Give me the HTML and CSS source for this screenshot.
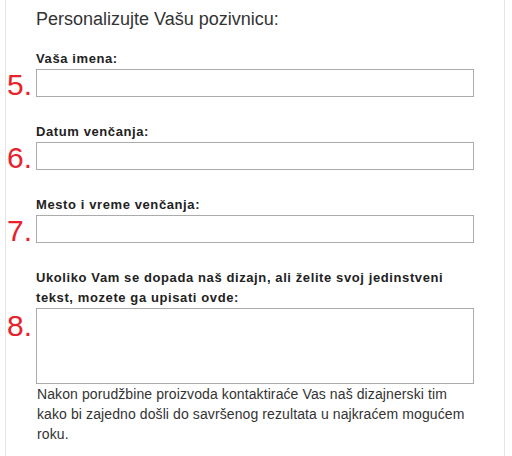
FILE: index.html
```html
<!DOCTYPE html>
<html lang="sr">
<head>
<meta charset="utf-8">
<title>Personalizujte Vašu pozivnicu</title>
<link rel="stylesheet" href="styles.css">
</head>
<body>
<div class="panel">
  <h2 class="title">Personalizujte Vašu pozivnicu:</h2>

  <div class="field">
    <label class="label" for="f5">Vaša imena:</label>
    <div class="row">
      <span class="num">5.</span>
      <input id="f5" class="input" type="text">
    </div>
  </div>

  <div class="field">
    <label class="label" for="f6">Datum venčanja:</label>
    <div class="row">
      <span class="num">6.</span>
      <input id="f6" class="input" type="text">
    </div>
  </div>

  <div class="field">
    <label class="label" for="f7">Mesto i vreme venčanja:</label>
    <div class="row">
      <span class="num">7.</span>
      <input id="f7" class="input" type="text">
    </div>
  </div>

  <div class="field">
    <label class="label" for="f8">Ukoliko Vam se dopada naš dizajn, ali želite svoj jedinstveni tekst, mozete ga upisati ovde:</label>
    <div class="row row-top">
      <span class="num">8.</span>
      <textarea id="f8" class="textarea"></textarea>
    </div>
    <p class="help">Nakon porudžbine proizvoda kontaktiraće Vas naš dizajnerski tim kako bi zajedno došli do savršenog rezultata u najkraćem mogućem roku.</p>
  </div>
</div>
</body>
</html>
```

FILE: styles.css
```css
html, body {
  margin: 0;
  padding: 0;
  background: #ffffff;
}

body {
  font-family: "Liberation Sans", Arial, sans-serif;
  color: #333333;
}

.panel {
  margin-left: 5px;
  width: 500px;
  box-sizing: border-box;
  min-height: 456px;
  border-left: 1px solid #e6e6e6;
  border-right: 1px solid #e6e6e6;
  padding: 9px 0 0 1px;
}

.title {
  margin: 0 0 20px 29px;
  font-size: 18px;
  line-height: 20px;
  font-weight: normal;
  color: #333333;
}

.field {
  margin-bottom: 25px;
}

.label {
  display: block;
  margin-left: 29px;
  width: 438px;
  font-size: 13px;
  line-height: 20px;
  font-weight: bold;
  letter-spacing: 0.6px;
  color: #222222;
}

.row {
  display: flex;
  align-items: flex-end;
}

.num {
  width: 29px;
  flex: none;
  font-size: 30px;
  line-height: 24px;
  color: #e8222a;
}

.row-top .num {
  align-self: flex-start;
  margin-top: 6px;
}

.input {
  display: block;
  width: 438px;
  height: 28px;
  box-sizing: border-box;
  margin: 0;
  padding: 0 6px;
  border: 1px solid #ababab;
  border-radius: 0;
  background: #ffffff;
  font-family: inherit;
  font-size: 14px;
}

.textarea {
  display: block;
  width: 438px;
  height: 76px;
  box-sizing: border-box;
  margin: 0;
  padding: 4px 6px;
  border: 1px solid #ababab;
  border-radius: 0;
  background: #ffffff;
  resize: none;
  font-family: inherit;
  font-size: 14px;
}

.help {
  margin: 0 0 0 30px;
  width: 436px;
  font-size: 14px;
  line-height: 20px;
  letter-spacing: 0.1px;
  color: #333333;
}
```
